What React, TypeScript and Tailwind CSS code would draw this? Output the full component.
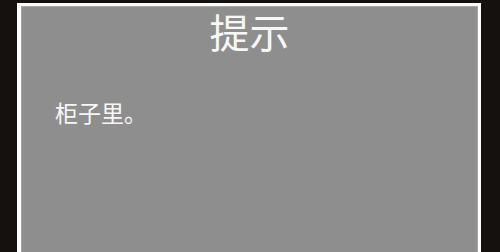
export default function App() {
  return (
    <div className="w-[500px] h-[252px] bg-[#15110e] overflow-hidden relative" style={{ fontFamily: '"Noto Sans CJK SC", "Noto Sans", sans-serif' }}>
      <div className="ml-[17px] mt-[3px] w-[464px] h-[260px] border-white border-t-[3px] border-l-4 border-r-[3px] bg-[#8e8e8e]">
        <div className="h-full border-l border-t border-r border-[#a6a6a6]">
          <div className="text-center text-[#f7f7f7] text-[40px] leading-[40px] pt-[4px]">提示</div>
          <div className="text-[#f7f7f7] text-[23px] leading-[23px] pl-[33px] pt-[50px]">柜子里。</div>
        </div>
      </div>
    </div>
  );
}
